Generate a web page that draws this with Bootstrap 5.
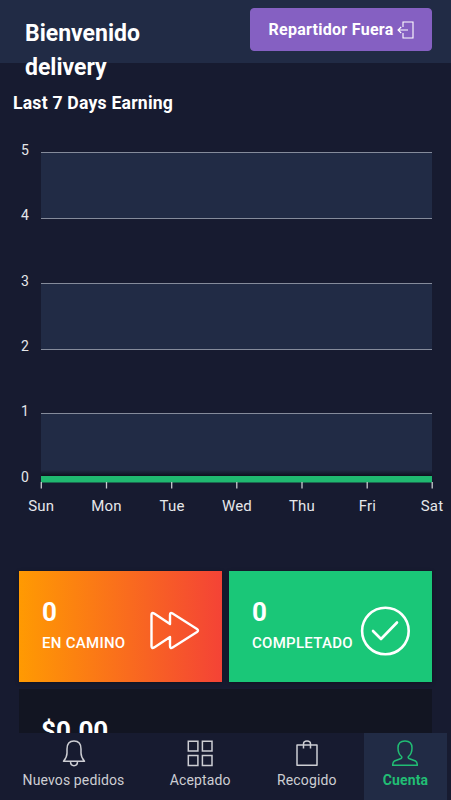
<!DOCTYPE html>
<html lang="es">
<head>
<meta charset="utf-8">
<meta name="viewport" content="width=device-width, initial-scale=1">
<title>Delivery</title>
<link href="https://cdn.jsdelivr.net/npm/bootstrap@5.3.0/dist/css/bootstrap.min.css" rel="stylesheet">
<style>
body{background:#171b30;color:#fff;font-family:Roboto,"Liberation Sans",sans-serif;height:800px;overflow:hidden}
svg{display:block;flex:none}
.topbar{background:#212b45;height:63px;padding:0 19px 0 25px}
.welcome{font-size:23px;line-height:34px;width:150px;padding-top:17px;font-weight:700}
.btn-out{--bs-btn-bg:#8560c2;--bs-btn-color:#fff;--bs-btn-border-color:#8560c2;width:182px;height:43px;margin-top:8px;font-size:16px;letter-spacing:.28px;border-radius:4px}
.btn-out svg{margin-left:-1px}
.earning{font-size:17.600px;line-height:24px;padding:28px 0 0 13px;letter-spacing:.22px}
.plot{margin-top:15px}
.plot text{fill:#e6e7ea;font-size:14px}
.plot .days text{font-size:15px;text-anchor:middle;letter-spacing:.2px}
.tiles{padding:19.500px 19px 0;gap:7px}
.tile{flex:1 1 0;height:111px;padding:24px 22px 0 23px;box-shadow:0 1px 4px rgba(0,0,0,.3)}
.tile-road{background:linear-gradient(90deg,#ff9a02,#f44336)}
.tile-done{background:#1ac778}
.tile-done svg{margin-top:11.500px}
.tile-cash{background:#121522;flex-basis:100%;box-shadow:none}
.num{font-size:26px;line-height:36px;font-weight:700}
.tile-road .num,.tile-done .num{margin-top:-1px;margin-bottom:1px}
.tile-cash .num{margin-left:-1px}
.cap{font-size:15px;line-height:24px;font-weight:500;letter-spacing:.28px;white-space:nowrap}
.bottom{background:#171b30;height:67px;padding:0 4px}
.bottom .nav-link{width:99px;color:#cdced3;font-size:14px;letter-spacing:.12px;line-height:20px;padding:7px 0 0;height:67px}
.bottom .nav-link.wide{width:139px}
.bottom .nav-link.active{width:83px;background:#212b45;color:#21bd74;font-weight:700}
.bottom .nav-link svg{margin:0 0 3px}
</style>
<script src="https://cdn.jsdelivr.net/npm/bootstrap@5.3.0/dist/js/bootstrap.bundle.min.js"></script>
</head>
<body>
<header class="topbar d-flex justify-content-between align-items-start">
  <h1 class="welcome mb-0">Bienvenido delivery</h1>
  <button class="btn btn-out fw-bold d-flex align-items-center justify-content-center gap-1 p-0">Repartidor Fuera
    <svg width="17" height="18" viewBox="0 0 17 18" fill="none" stroke="#fff" stroke-width="1.1"><path d="M6 6V1h10v16H6v-5M11 9H1M4.200 6 1 9l3.200 3"/></svg>
  </button>
</header>
<main>
  <h2 class="earning fw-bold mb-0">Last 7 Days Earning</h2>
  <svg class="plot" width="451" height="421" viewBox="0 130 451 421">
    <defs><linearGradient id="shade" x1="0" y1="0" x2="0" y2="1"><stop offset="0" stop-color="#0b0e18" stop-opacity="0"/><stop offset="1" stop-color="#0b0e18" stop-opacity=".9"/></linearGradient></defs>
    <g fill="#212b45"><path d="M41 153h391v65H41zM41 283h391v66H41zM41 414h391v64H41z"/></g>
    <g stroke="#858b9b"><path d="M41 152.500h391M41 218.500h391M41 283.500h391M41 349.500h391M41 413.500h391"/></g>
    <path fill="url(#shade)" d="M41 470h391v6H41z"/>
    <path fill="#20b970" d="M41 476h391v6.500H41z"/>
    <path stroke="#c7cacd" stroke-width="1.300" d="M41.300 482v6.500M106.500 482v6.500M171.700 482v6.500M236.800 482v6.500M302 482v6.500M367.200 482v6.500M432.200 482v6.500"/>
    <g><text x="21" y="155">5</text><text x="21" y="220">4</text><text x="21" y="286">3</text><text x="21" y="351">2</text><text x="21" y="416">1</text><text x="21" y="482">0</text></g>
    <g class="days"><text x="41.300" y="511">Sun</text><text x="106.500" y="511">Mon</text><text x="172" y="511">Tue</text><text x="237" y="511">Wed</text><text x="302" y="511">Thu</text><text x="367.500" y="511">Fri</text><text x="432" y="511">Sat</text></g>
  </svg>
  <section class="tiles d-flex flex-wrap">
    <div class="tile tile-road d-flex justify-content-between">
      <div><div class="num">0</div><div class="cap">EN CAMINO</div></div>
      <svg class="mt-3" width="50" height="40" viewBox="0 0 50 40" fill="none" stroke="#fff" stroke-width="2.400" stroke-linejoin="round"><path d="M1.500 4Q1.500 1 4.200 2.600L20 13V4Q20 1 22.600 2.600L47 18Q49 19.500 47 21L22.600 36.400Q20 38 20 35V26L4.200 36.400Q1.500 38 1.500 35Z"/></svg>
    </div>
    <div class="tile tile-done d-flex justify-content-between">
      <div><div class="num">0</div><div class="cap">COMPLETADO</div></div>
      <svg width="50" height="50" viewBox="0 0 50 50" fill="none" stroke="#fff" stroke-width="2.600" stroke-linecap="round" stroke-linejoin="round"><circle cx="25.400" cy="25" r="23.300"/><path d="M13 25 21 33 37 16.500"/></svg>
    </div>
    <div class="tile tile-cash"><div class="num">$0.00</div></div>
  </section>
</main>
<nav class="bottom fixed-bottom nav flex-nowrap justify-content-between">
  <a class="nav-link wide d-flex flex-column align-items-center" href="#"><svg width="26" height="27" viewBox="0 0 26 27" fill="none" stroke="currentColor" stroke-width="1.500" stroke-linejoin="round"><path d="M2.500 21.200C4.500 19 6 17 6 13V9C6 4 8.500 1 13 1S20 4 20 9v4c0 4 1.500 6 3.500 8.200ZM9.500 21.500C9.500 27 16.500 27 16.500 21.500"/></svg>Nuevos pedidos</a>
  <a class="nav-link d-flex flex-column align-items-center" href="#"><svg width="26" height="27" viewBox="0 0 26 27" fill="none" stroke="currentColor" stroke-width="1.500"><path d="M1.300 1.200h9.600v9.800H1.300zM15.400 1.200H25v9.800h-9.600zM1.300 15.600h9.600v9.800H1.300zM15.400 15.600H25v9.800h-9.600z"/></svg>Aceptado</a>
  <a class="nav-link d-flex flex-column align-items-center" href="#"><svg width="26" height="27" viewBox="0 0 26 27" fill="none" stroke="currentColor" stroke-width="1.500" stroke-linejoin="round"><path d="M9.500 5H3v20.300h20V5h-6.500M9.500 8.500V4Q9.500 1 13 1T16.500 4V8.500M9.500 5h7"/></svg>Recogido</a>
  <a class="nav-link active d-flex flex-column align-items-center" href="#"><svg width="26" height="27" viewBox="0 0 26 27" fill="none" stroke="currentColor" stroke-width="1.500" stroke-linejoin="round"><path d="M13 1C8.500 1 6 3.500 6 8c0 4 1 6.500 3.500 8.500.8 1 0 1.800-1 2.200L2.500 21C1 21.700.7 23 .7 25.300h24.600c0-2.300-.3-3.600-1.800-4.300l-6-2.300c-1-.4-1.800-1.200-1-2.200C19 14.500 20 12 20 8c0-4.500-2.500-7-7-7Z"/></svg>Cuenta</a>
</nav>
</body>
</html>
